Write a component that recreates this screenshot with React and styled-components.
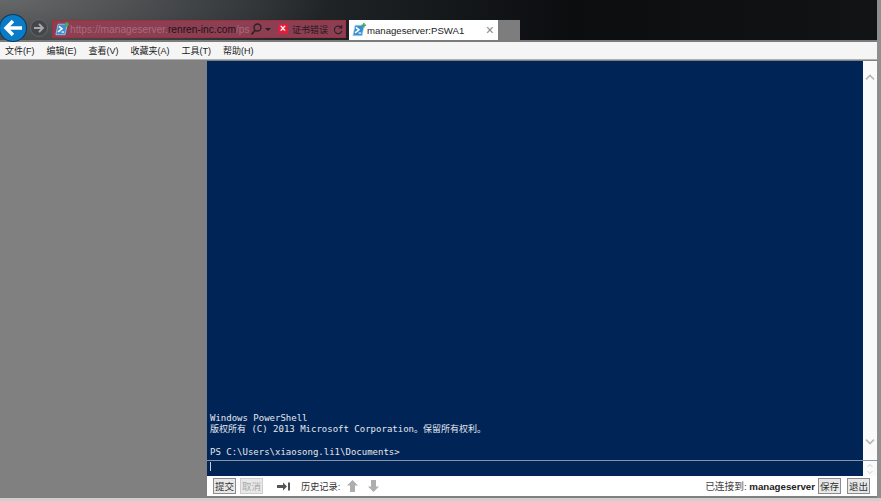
import React from 'react'
import styled, { createGlobalStyle } from 'styled-components'

const PsIcon = ({ size = 14 }) => (
  <svg width={size} height={size} viewBox='0 0 16 16' style={{ flex: 'none' }}>
    <path d='M3.500 2.500h10.500l-2.500 12H1z' fill='#3a8fd0' stroke='#b5d8f0' strokeWidth='0.8' />
    <path d='M4.500 5l3.500 2.800-4.500 3.500' fill='none' stroke='#fff' strokeWidth='1.700' />
    <path d='M7.500 11.500h3' stroke='#fff' strokeWidth='1.400' />
    <path d='M13.500 0v5M11 2.500h5' stroke='#3fae55' strokeWidth='1.700' />
  </svg>
)

export default function App () {
  return (
    <Page>
      <GlobalStyle />
      <Chrome>
        <BackButton>
          <svg width='22' height='22' viewBox='0 0 22 22'>
            <path d='M20 11H5M11 4l-7 7 7 7' fill='none' stroke='#fff' strokeWidth='3.400' />
          </svg>
        </BackButton>
        <ForwardButton>
          <svg width='12' height='12' viewBox='0 0 12 12'>
            <path d='M1 6h9M6 2l4 4-4 4' fill='none' stroke='#a8a8a8' strokeWidth='1.800' />
          </svg>
        </ForwardButton>
        <AddressBar>
          <PsIcon />
          <Url>https://manageserver.<b>renren-inc.com</b>/ps</Url>
          <BarIcon $left={3} width='12' height='13' viewBox='0 0 12 13'>
            <circle cx='7.500' cy='4.500' r='3.500' fill='none' stroke='#2a2024' strokeWidth='1.300' />
            <path d='M5 7.500L1.500 11.500' stroke='#2a2024' strokeWidth='1.700' />
          </BarIcon>
          <Caret />
          <CertBadge>×</CertBadge>
          <CertText>证书错误</CertText>
          <BarIcon $left={5} width='10' height='11' viewBox='0 0 10 11'>
            <path d='M8.500 4A3.800 3.800 0 1 0 8.800 7M8.800 1v3H5.800' fill='none' stroke='#2a2024' strokeWidth='1.100' />
          </BarIcon>
        </AddressBar>
        <Tab>
          <PsIcon />
          <TabTitle>manageserver:PSWA1</TabTitle>
          <TabClose>×</TabClose>
        </Tab>
        <NewTab />
      </Chrome>
      <MenuBar>
        {['文件(F)', '编辑(E)', '查看(V)', '收藏夹(A)', '工具(T)', '帮助(H)'].map(m => <MenuItem key={m}>{m}</MenuItem>)}
      </MenuBar>
      <Main>
        <SidePanel />
        <Content>
          <ConsoleRow>
            <Output>
              <Line>Windows PowerShell</Line>
              <Line>版权所有 (C) 2013 Microsoft Corporation。保留所有权利。</Line>
              <Line>&nbsp;</Line>
              <Line>PS C:\Users\xiaosong.li1\Documents&gt;</Line>
            </Output>
            <ScrollBar>
              <Chevron viewBox='0 0 14 10'><path d='M2 8l5-5 5 5' /></Chevron>
              <Chevron viewBox='0 0 14 10'><path d='M2 2l5 5 5-5' /></Chevron>
            </ScrollBar>
          </ConsoleRow>
          <InputRow>
            <InputLine><Cursor /></InputLine>
            <MiniScroll>
              <Chevron $small viewBox='0 0 14 10'><path d='M2 8l5-5 5 5' /></Chevron>
              <Chevron $small viewBox='0 0 14 10'><path d='M2 2l5 5 5-5' /></Chevron>
            </MiniScroll>
          </InputRow>
          <BottomBar>
            <SmallButton>提交</SmallButton>
            <SmallButton disabled>取消</SmallButton>
            <TabArrow width='13' height='9' viewBox='0 0 13 9'>
              <path d='M0 3h6V0.500l4 4-4 4V6H0z' fill='#555' />
              <path d='M11 0.500h2v8h-2z' fill='#555' />
            </TabArrow>
            <HistoryLabel>历史记录:</HistoryLabel>
            <HistoryArrow width='11' height='12' viewBox='0 0 11 12'>
              <path d='M5.500 0L11 5.500H8V12H3V5.500H0z' fill='#aeaeae' />
            </HistoryArrow>
            <HistoryArrow width='11' height='12' viewBox='0 0 11 12'>
              <path d='M5.500 12L11 6.500H8V0H3v6.500H0z' fill='#aeaeae' />
            </HistoryArrow>
            <Spacer />
            <Status>已连接到: <strong>manageserver</strong></Status>
            <SmallButton>保存</SmallButton>
            <SmallButton $left={2}>退出</SmallButton>
          </BottomBar>
        </Content>
      </Main>
      <Footer />
    </Page>
  )
}

const GlobalStyle = createGlobalStyle`
  html, body { margin: 0; padding: 0; background: #8a8a8a; overflow: hidden; }
  * { box-sizing: border-box; }
`

const Page = styled.div`
  width: 881px;
  height: 501px;
  padding-right: 4px;
  display: flex;
  flex-direction: column;
  font-family: "Liberation Sans", "Noto Sans CJK SC", sans-serif;
  background: #8e8e8e;
  overflow: hidden;
`

const Chrome = styled.div`
  height: 42px;
  flex: none;
  display: flex;
  align-items: flex-end;
  background:
    radial-gradient(ellipse 330px 70px at 0 0, rgba(120, 120, 120, 0.75), rgba(120, 120, 120, 0) 100%),
    linear-gradient(90deg, #33373a 0, #25292c 30%, #16191c 50%, #0b0d0f 65%, #111315 100%);
  border-bottom: 2px solid #7c7c7c;
`

const BackButton = styled.div`
  width: 26px;
  height: 26px;
  margin-bottom: -1px;
  border-radius: 50%;
  background: #0a7bc6;
  box-shadow: 0 0 0 1px #0a3c5e;
  display: flex;
  align-items: center;
  justify-content: center;
  flex: none;
`

const ForwardButton = styled.div`
  width: 18px;
  height: 18px;
  margin: 0 0 3px 4px;
  border-radius: 50%;
  background: #44474a;
  border: 1px solid #666;
  display: flex;
  align-items: center;
  justify-content: center;
  flex: none;
`

const AddressBar = styled.div`
  width: 294px;
  height: 18px;
  margin: 0 0 2px 4px;
  padding-left: 2px;
  display: flex;
  align-items: center;
  flex: none;
  background: #8c3f52;
  border: 1px solid #a0303f;
`

const Url = styled.div`
  width: 177px;
  margin-left: 1px;
  flex: none;
  font-size: 10.2px;
  white-space: nowrap;
  color: #a86c7b;
  b { font-weight: 400; color: #1c1216; }
`

const BarIcon = styled.svg`
  margin-left: ${p => p.$left}px;
  flex: none;
`

const Caret = styled.div`
  width: 0;
  height: 0;
  margin-left: 3px;
  flex: none;
  border-left: 3px solid transparent;
  border-right: 3px solid transparent;
  border-top: 3px solid #2a2024;
`

const CertBadge = styled.div`
  width: 10px;
  height: 10px;
  margin-left: 7px;
  border-radius: 2px;
  background: #e01e3c;
  color: #fff;
  font-size: 10px;
  font-weight: 700;
  line-height: 10px;
  text-align: center;
  flex: none;
`

const CertText = styled.div`
  margin-left: 4px;
  flex: none;
  font-size: 9px;
  white-space: nowrap;
  color: #2a1a1e;
`

const Tab = styled.div`
  width: 149px;
  height: 20px;
  margin-left: 3px;
  padding: 0 4px 0 3px;
  display: flex;
  align-items: center;
  flex: none;
  background: #fff;
`

const TabTitle = styled.div`
  flex: 1;
  margin-left: 1px;
  font-size: 9.6px;
  color: #222;
  white-space: nowrap;
`

const TabClose = styled.div`
  font-size: 14px;
  line-height: 14px;
  color: #888;
`

const NewTab = styled.div`
  width: 22px;
  height: 20px;
  background: #7d7d7d;
  flex: none;
`

const MenuBar = styled.div`
  height: 18px;
  flex: none;
  display: flex;
  align-items: center;
  padding-left: 5px;
  gap: 12px;
  background: #f5f5f5;
  border-bottom: 1px solid #b0b0b0;
`

const MenuItem = styled.div`
  font-size: 9px;
  color: #222;
  white-space: nowrap;
`

const Main = styled.div`
  flex: 1;
  display: flex;
  min-height: 0;
  padding: 1px 0 2px 0;
  background: #808080;
`

const SidePanel = styled.div`
  width: 207px;
  flex: none;
`

const Content = styled.div`
  flex: 1;
  display: flex;
  flex-direction: column;
  min-width: 0;
  background: #fff;
`

const ConsoleRow = styled.div`
  flex: 1;
  display: flex;
  min-height: 0;
`

const Output = styled.div`
  flex: 1;
  display: flex;
  flex-direction: column;
  justify-content: flex-end;
  padding: 0 0 2px 3px;
  background: #012456;
  color: #e4e8ee;
  font-family: "DejaVu Sans Mono", "Noto Sans CJK SC", monospace;
  font-size: 9px;
`

const Line = styled.div`
  height: 11.33px;
  line-height: 11.33px;
  white-space: pre;
`

const ScrollBar = styled.div`
  width: 14px;
  flex: none;
  display: flex;
  flex-direction: column;
  justify-content: space-between;
  align-items: center;
  padding: 12px 0 14px;
  background: #fafafa;
`

const Chevron = styled.svg`
  width: ${p => (p.$small ? 8 : 12)}px;
  height: ${p => (p.$small ? 5 : 8)}px;
  fill: none;
  stroke: ${p => (p.$small ? '#cfcfcf' : '#b8b8b8')};
  stroke-width: 2;
`

const InputRow = styled.div`
  height: 16px;
  flex: none;
  display: flex;
`

const InputLine = styled.div`
  flex: 1;
  padding: 1px 0 0 3px;
  background: #012456;
  border-top: 1px solid #8a94a6;
`

const Cursor = styled.div`
  width: 1px;
  height: 9px;
  background: #c8d0dc;
`

const MiniScroll = styled.div`
  width: 14px;
  flex: none;
  display: flex;
  flex-direction: column;
  align-items: center;
  justify-content: center;
  gap: 2px;
  background: #fafafa;
  border-top: 1px solid #8a94a6;
`

const BottomBar = styled.div`
  height: 20px;
  flex: none;
  display: flex;
  align-items: center;
  padding: 0 7px 0 6px;
  gap: 4px;
  background: #fff;
`

const SmallButton = styled.div`
  width: 23px;
  height: 16px;
  margin-left: ${p => p.$left || 0}px;
  display: flex;
  align-items: center;
  justify-content: center;
  font-size: 9.5px;
  background: #e8e8e8;
  border: 1px solid ${p => (p.disabled ? '#cdcdcd' : '#8c8c8c')};
  color: ${p => (p.disabled ? '#a8a8a8' : '#333')};
  flex: none;
`

const TabArrow = styled.svg`
  margin-left: 10px;
  flex: none;
`

const HistoryLabel = styled.div`
  margin-left: 7px;
  margin-right: 3px;
  font-size: 9.2px;
  color: #333;
  white-space: nowrap;
`

const HistoryArrow = styled.svg`
  flex: none;
  & + & { margin-left: 6px; }
`

const Spacer = styled.div`
  flex: 1;
`

const Status = styled.div`
  margin-right: -1px;
  font-size: 9.7px;
  color: #444;
  white-space: nowrap;
  strong { color: #222; font-weight: 700; }
`

const Footer = styled.div`
  height: 3px;
  flex: none;
  margin-right: -4px;
  background: #cfcfcf;
`
